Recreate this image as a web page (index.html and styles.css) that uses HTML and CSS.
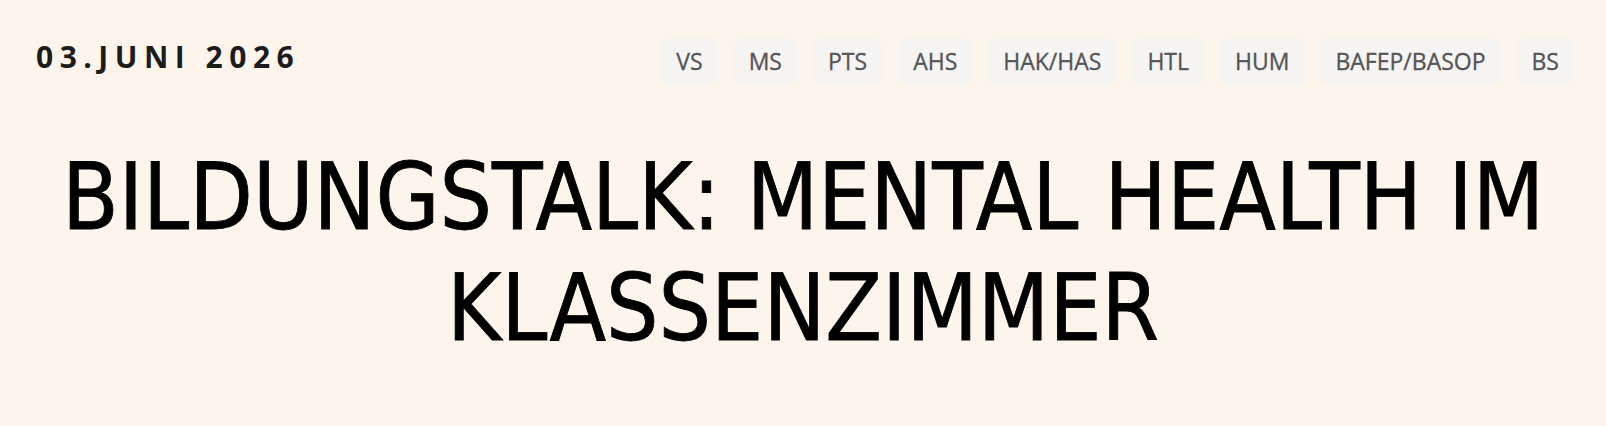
FILE: index.html
```html
<!DOCTYPE html>
<html lang="de">
<head>
<meta charset="utf-8">
<title>Bildungstalk</title>
<link rel="stylesheet" href="styles.css">
</head>
<body>
<header class="meta">
  <div class="date">03.JUNI 2026</div>
  <ul class="tags">
    <li class="tag">VS</li>
    <li class="tag">MS</li>
    <li class="tag">PTS</li>
    <li class="tag">AHS</li>
    <li class="tag">HAK/HAS</li>
    <li class="tag">HTL</li>
    <li class="tag">HUM</li>
    <li class="tag">BAFEP/BASOP</li>
    <li class="tag">BS</li>
  </ul>
</header>
<h1 class="title">BILDUNGSTALK: MENTAL HEALTH IM KLASSENZIMMER</h1>
</body>
</html>
```
FILE: styles.css
```css
html, body {
  margin: 0;
  padding: 0;
}
body {
  background: #fdf5eb;
  font-family: "Open Sans", "Noto Sans", sans-serif;
  color: #000;
}
.meta {
  display: flex;
  justify-content: space-between;
  align-items: flex-start;
  padding: 36px 32px 0 36px;
}
.date {
  font-weight: 700;
  font-size: 30px;
  line-height: 41px;
  letter-spacing: 6.5px;
  color: #1c1c1c;
}
.tags {
  display: flex;
  gap: 16px;
  list-style: none;
  margin: 2px 0 0 0;
  padding: 0;
}
.tag {
  height: 47px;
  line-height: 47px;
  padding: 0 15px;
  border-radius: 8px;
  background: #f6f3f3;
  color: #555;
  font-size: 23px;
  -webkit-text-stroke: 0.3px #555;
}
.title {
  margin: 57px 32px 0;
  text-align: center;
  font-family: "DejaVu Sans Condensed", "DejaVu Sans", sans-serif;
  font-size: 92px;
  line-height: 111px;
  font-weight: 400;
  -webkit-text-stroke: 0.8px #000;
}
```
